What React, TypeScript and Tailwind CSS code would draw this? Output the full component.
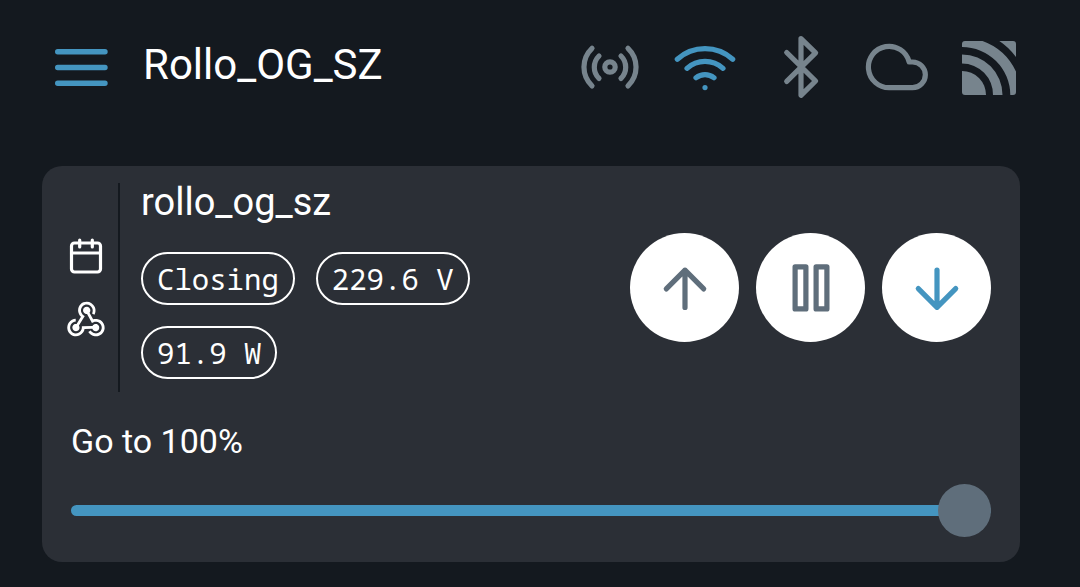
import { useState, type ReactNode } from "react";

function StatusIcon({ label, active, children }: { label: string; active?: boolean; children: ReactNode }) {
  return (
    <svg
      role="img"
      aria-label={label}
      viewBox="0 0 64 64"
      className={`size-16 shrink-0 ${active ? "text-[#4495c0]" : "text-[#77848d]"}`}
      fill="none"
      stroke="currentColor"
      strokeWidth="5.2"
      strokeLinecap="round"
      strokeLinejoin="round"
    >
      {children}
    </svg>
  );
}

function Chip({ children }: { children: ReactNode }) {
  return (
    <li className="flex h-[53px] items-center rounded-full border-2 border-white px-[14px] font-['Noto_Sans_Mono','Droid_Sans_Mono','DejaVu_Sans_Mono',monospace] text-[29px] whitespace-pre">
      {children}
    </li>
  );
}

function RoundButton({ label, active, children }: { label: string; active?: boolean; children: ReactNode }) {
  return (
    <button
      type="button"
      aria-label={label}
      className={`flex size-[109px] shrink-0 items-center justify-center rounded-full bg-white ${active ? "text-[#4495c0]" : "text-[#5f6e7b]"}`}
    >
      <svg
        viewBox="0 0 64 64"
        className="size-16"
        fill="none"
        stroke="currentColor"
        strokeWidth="5.2"
        strokeLinecap="round"
        strokeLinejoin="round"
      >
        {children}
      </svg>
    </button>
  );
}

export default function App() {
  const [position, setPosition] = useState(100);

  return (
    <div className="min-h-screen bg-[#14191f] pb-6 font-[Roboto,sans-serif] text-white">
      <header className="flex items-center px-[55px] pt-[35px]">
        <button type="button" aria-label="Menu" className="mr-[35px] text-[#4495c0]">
          <svg viewBox="0 0 53 64" className="h-16 w-[53px]" stroke="currentColor" strokeWidth="5.4" strokeLinecap="round">
            <path d="M2.7 16.7H50M2.7 32.5H50M2.7 48.3H50" />
          </svg>
        </button>
        <h1 className="flex-1 pb-1 text-[42px] leading-[48px]">Rollo_OG_SZ</h1>
        <div className="flex gap-8">
          <StatusIcon label="Access point">
            <circle cx="33" cy="32" r="5.2" />
            <path d="M22 21a15.7 15.7 0 0 0 0 22.4M44 21a15.7 15.7 0 0 1 0 22.4M15 13.3a26 26 0 0 0 0 37.6M51 13.3a26 26 0 0 1 0 37.6" />
          </StatusIcon>
          <StatusIcon label="Wi-Fi" active>
            <path d="M4.3 24.3a41.5 41.5 0 0 1 55.4 0M14 33.3a26.6 26.6 0 0 1 36 0M23 42.7a14.6 14.6 0 0 1 18 0" />
            <circle cx="32" cy="52.6" r="2.6" fill="currentColor" stroke="none" />
          </StatusIcon>
          <StatusIcon label="Bluetooth">
            <path d="M17.7 17.5L46.6 46 32 60.3V3.6L46.6 17.9 17.7 46.4" />
          </StatusIcon>
          <StatusIcon label="Cloud">
            <path d="M47.5 27h-3.3A20.7 20.7 0 1 0 24.8 52.7H47.5A12.85 12.85 0 0 0 47.5 27z" />
          </StatusIcon>
          <StatusIcon label="MQTT">
            <g fill="currentColor" stroke="none">
              <path d="M1 36a24 24 0 0 1 24 24H4a3 3 0 0 1-3-3z" />
              <path d="M1 19.5A40.5 40.5 0 0 1 41.5 60H32A31 31 0 0 0 1 28.5z" />
              <path d="M4 6H21.5A59 59 0 0 1 55 36.5V57a3 3 0 0 1-3 3H49.3A48.3 48.3 0 0 0 1 12V9a3 3 0 0 1 3-3z" />
              <path d="M38.3 6H52a3 3 0 0 1 3 3V22A66 66 0 0 0 38.3 6z" />
            </g>
          </StatusIcon>
        </div>
      </header>

      <main className="mt-[67px] mr-[60px] ml-[42px] rounded-[20px] bg-[#2b2f36] pt-[17px] pb-[25px]">
        <section className="flex pr-[29px]">
          <div className="flex w-[78px] shrink-0 flex-col items-center justify-center gap-6 border-r-2 border-[#14191f] pl-3 text-white">
            <svg role="img" aria-label="Schedule" viewBox="0 0 40 40" className="size-10" fill="none" stroke="currentColor" strokeWidth="3.2" strokeLinecap="round">
              <rect x="5.5" y="7" width="29" height="29" rx="3" />
              <path d="M5.5 17h29M13.7 4v7M26.3 4v7" />
            </svg>
            <svg role="img" aria-label="Webhook" viewBox="1.5 1.9 21 21" className="size-10" fill="currentColor">
              <path d="M10.46,19C9,21.07 6.15,21.59 4.09,20.15C2.04,18.71 1.56,15.84 3,13.75C3.87,12.5 5.21,11.83 6.58,11.77L6.63,13.2C5.72,13.27 4.84,13.74 4.27,14.56C3.27,16 3.58,17.94 4.95,18.91C6.33,19.87 8.26,19.5 9.26,18.07C9.57,17.62 9.75,17.13 9.82,16.63V15.62L15.4,15.58L15.47,15.47C16,14.55 17.15,14.23 18.05,14.75C18.95,15.27 19.26,16.43 18.73,17.35C18.2,18.26 17.04,18.58 16.14,18.06C15.73,17.83 15.44,17.46 15.31,17.04L11.24,17.06C11.13,17.73 10.87,18.38 10.46,19M17.74,11.86C20.27,12.17 22.07,14.44 21.76,16.93C21.45,19.43 19.15,21.2 16.62,20.89C15.13,20.71 13.9,19.86 13.19,18.68L14.43,17.96C14.92,18.73 15.75,19.28 16.75,19.41C18.5,19.62 20.05,18.43 20.26,16.76C20.47,15.09 19.23,13.56 17.5,13.35C16.96,13.29 16.44,13.36 15.97,13.53L15.12,13.97L12.54,9.2H12.32C11.26,9.16 10.41,8.29 10.44,7.25C10.47,6.21 11.4,5.4 12.45,5.44C13.5,5.5 14.33,6.35 14.3,7.39C14.28,7.83 14.11,8.23 13.84,8.54L15.74,12.05C16.36,11.85 17.04,11.78 17.74,11.86M8.25,9.14C7.25,6.79 8.31,4.1 10.62,3.12C12.94,2.14 15.62,3.25 16.62,5.6C17.21,6.97 17.09,8.47 16.42,9.67L15.18,8.95C15.6,8.14 15.67,7.15 15.27,6.22C14.59,4.62 12.78,3.85 11.23,4.5C9.67,5.16 8.97,7 9.65,8.6C9.93,9.26 10.4,9.77 10.97,10.11L11.36,10.32L8.29,15.31C8.32,15.36 8.36,15.42 8.39,15.5C8.88,16.41 8.54,17.56 7.62,18.05C6.71,18.54 5.56,18.18 5.06,17.24C4.57,16.31 4.91,15.16 5.83,14.67C6.22,14.46 6.65,14.41 7.06,14.5L9.37,10.73C8.9,10.3 8.5,9.76 8.25,9.14Z" />
            </svg>
          </div>
          <div className="min-w-0 flex-1 pb-[13px] pl-[21px]">
            <h2 className="text-[38px] leading-[38px]">rollo_og_sz</h2>
            <ul className="mt-[31px] flex flex-wrap gap-[21px]">
              <Chip>Closing</Chip>
              <Chip>229.6 V</Chip>
              <Chip>91.9 W</Chip>
            </ul>
          </div>
          <div className="ml-5 flex items-center gap-[17px]">
            <RoundButton label="Open">
              <path d="M32 51.5V14.2M13.3 32.900L32 14.200l18.700 18.700" />
            </RoundButton>
            <RoundButton label="Pause">
              <path d="M16.100 10.800h10.800v42.100H16.100zM37.100 10.800h10.800v42.100H37.100z" />
            </RoundButton>
            <RoundButton label="Close" active>
              <path d="M32 14V51.300M13.300 32.600L32 51.300l18.700-18.700" />
            </RoundButton>
          </div>
        </section>

        <section className="mt-[28px] px-[29px]">
          <label htmlFor="position" className="block text-[34px] leading-[42px]">
            Go to {position}%
          </label>
          <input
            id="position"
            type="range"
            min={0}
            max={100}
            value={position}
            onChange={(e) => setPosition(Number(e.target.value))}
            className="mt-[22px] block h-[53px] w-full appearance-none bg-transparent [&::-webkit-slider-runnable-track]:h-[11px] [&::-webkit-slider-runnable-track]:rounded-full [&::-webkit-slider-runnable-track]:bg-[#4495c0] [&::-webkit-slider-thumb]:-mt-[21px] [&::-webkit-slider-thumb]:size-[53px] [&::-webkit-slider-thumb]:appearance-none [&::-webkit-slider-thumb]:rounded-full [&::-webkit-slider-thumb]:bg-[#5f6e7b]"
          />
        </section>
      </main>
    </div>
  );
}
